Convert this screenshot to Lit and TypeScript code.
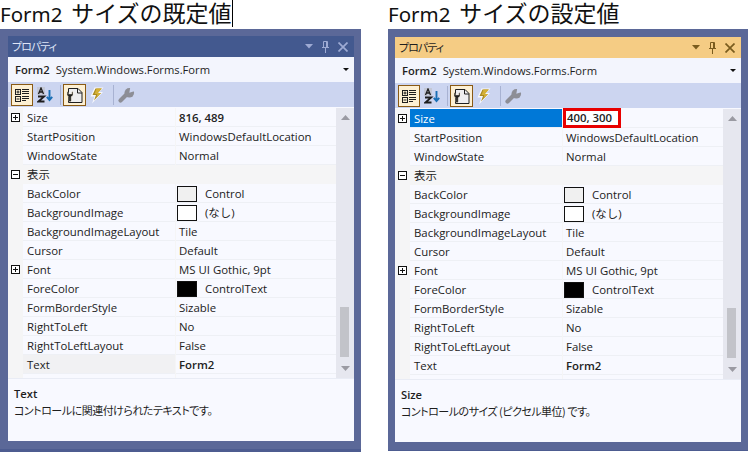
import { LitElement, html, css, svg } from "lit";
import { customElement, property } from "lit/decorators.js";

type Row = { kind?: "cat"; name: string; value?: string; bold?: boolean; plus?: boolean; swatch?: string; minus?: boolean };

const rows = (size: string): Row[] => [
  { name: "Size", value: size, bold: true, plus: true },
  { name: "StartPosition", value: "WindowsDefaultLocation" },
  { name: "WindowState", value: "Normal" },
  { kind: "cat", name: "表示", minus: true },
  { name: "BackColor", value: "Control", swatch: "#f0f0f0" },
  { name: "BackgroundImage", value: "(なし)", swatch: "#ffffff" },
  { name: "BackgroundImageLayout", value: "Tile" },
  { name: "Cursor", value: "Default" },
  { name: "Font", value: "MS UI Gothic, 9pt", plus: true },
  { name: "ForeColor", value: "ControlText", swatch: "#000000" },
  { name: "FormBorderStyle", value: "Sizable" },
  { name: "RightToLeft", value: "No" },
  { name: "RightToLeftLayout", value: "False" },
  { name: "Text", value: "Form2", bold: true },
];

const catIcon = svg`<svg width="16" height="16" viewBox="0 0 16 16"><g fill="none" stroke="#1e1e1e"><rect x="1.500" y="2.500" width="5" height="5"/><rect x="1.500" y="9.500" width="5" height="5"/></g><path d="M2.500 5h3M4 3.500v3M2.500 12h3" stroke="#1e1e1e"/><path d="M8 2.500h7M8 4.500h7M8 6.500h7M8 9.500h7M8 11.500h7M8 13.500h4" stroke="#1e1e1e"/></svg>`;
const azIcon = svg`<svg width="17" height="16" viewBox="0 0 17 16"><rect x="0" y="0" width="8" height="8" fill="#c4c8d6"/><path d="M1.500 7 4 1l2.500 6M2.600 5h2.800" fill="none" stroke="#1e1e1e" stroke-width="1.300"/><path d="M1 9.500h6.200L1.500 14.500H7.500" fill="none" stroke="#1e1e1e" stroke-width="1.800"/><path d="M12.500 3v10M9.800 9.800l2.700 3.200 2.700-3.200" fill="none" stroke="#1a6fb5" stroke-width="1.900"/></svg>`;
const pageIcon = svg`<svg width="18" height="18" viewBox="0 0 18 18"><path d="M2.500 2.500h9.500l4 4v10H2.500z" fill="#eeeef0" stroke="#1e1e1e"/><path d="M11.500 2.500v4.500h4.500" fill="none" stroke="#1e1e1e"/><path d="M1 5.500v3a2.300 2.300 0 0 0 1.800 2.100V14.500a1.200 1.200 0 0 0 2.400 0v-3.900A2.300 2.300 0 0 0 7 8.500V5.500L5.800 6.300V8H2.200V6.300z" fill="#1e1e1e" stroke="#fbeccb" stroke-width=".4"/></svg>`;
const boltIcon = svg`<svg width="18" height="18" viewBox="0 0 18 18"><path d="M6.500 1.500h9l-4 4.500h3.500L4 17.500l2.500-7H2.500z" fill="#f7f8fd"/><path d="M7.500 2.500h6.300l-4 4.500h3.200L6 14.500l2-5.500H4.500z" fill="#a98a22"/><path d="M8.500 2.500h5.300l-4 4.500h3.200L8.500 11.500l.8-3.500H6.500z" fill="#d4b035"/></svg>`;
const wrenchIcon = svg`<svg width="18" height="18" viewBox="0 0 18 18"><path d="M3.500 14.500 10 8" stroke="#8d8e96" stroke-width="4.200" stroke-linecap="round" fill="none"/><circle cx="12.300" cy="6.800" r="4.800" fill="#8d8e96"/><path d="M12.300 6.800 13.500 0H19V4.800z" fill="#ccd5f0"/></svg>`;

@customElement("prop-panel")
class PropPanel extends LitElement {
  @property() label = "Form2";
  @property() heading = "";
  @property() size = "";
  @property({ type: Boolean }) active = false;
  @property() descTitle = "";
  @property() descText = "";
  @property({ type: Boolean }) caret = false;

  static styles = css`
    :host { display: block; font-family: "Open Sans", "Noto Sans CJK JP", sans-serif; }
    h1 { margin: 0; height: 29px; font: 400 20.5px/27px "Noto Sans", "Noto Sans CJK JP", sans-serif; color: #111; white-space: nowrap; word-spacing: 3.5px; position: relative; }
    h1 .k { font-size: 23px; }
    .caret { position: absolute; left: 232px; top: 0; width: 1px; height: 27px; background: #000; }
    .frame { background: #5b6898; padding: 7px 7px 8px 8px; border-bottom: 3px solid #4d5c90; width: 346px; }
    .frame.on { padding: 8px 7px 8px 7px; border-bottom-width: 1px; }
    .inner { height: 405px; display: flex; flex-direction: column; background: #f8f9ff; }
    .title { height: 21px; flex: none; background: #43598f; color: #dfe5f7; display: flex; align-items: center; padding: 0 6px 0 4px; font: 11px/21px "Noto Sans CJK JP", sans-serif; justify-content: space-between; font-feature-settings: "palt"; letter-spacing: -1px; }
    .title.on { background: #f5cc84; color: #1e1e1e; }
    .title svg { display: block; }
    .btns { display: flex; gap: 9px; align-items: center; }
    .combo { height: 25px; flex: none; background: #f3f5fd; display: flex; align-items: center; padding: 0 5px 0 7px; font-size: 11.2px; color: #1e1e1e; gap: 6px; }
    .combo b { font-weight: 600; }
    .combo .sp { flex: 1; }
    .tri { width: 0; height: 0; border: 3px solid transparent; border-top: 3px solid #111; border-bottom: 0; }
    .tools { height: 25px; flex: none; background: #ccd5f0; display: flex; align-items: center; padding-left: 3px; margin-bottom: 1px; }
    .tb { width: 22px; height: 22px; box-sizing: border-box; display: flex; align-items: center; justify-content: center; flex: none; }
    .tb.az { margin-left: 1px; }
    .tb.sel { background: #fdf0d3; border: 1px solid #8a5a14; }
    .tb.page { width: 23px; }
    .sep { width: 1px; height: 20px; background: #a8b2d2; flex: none; }
    .s1 { margin: 0 2px 0 4px; }
    .s2 { margin: 0 1px 0 5px; }
    .body { height: 270px; flex: none; display: flex; }
    .grid { flex: 1; display: flex; flex-direction: column; background: #f5f5f6; }
    .row { height: 19px; flex: none; display: flex; font-size: 11.4px; line-height: 19px; color: #222; }
    .gut { width: 15px; flex: none; display: flex; align-items: center; justify-content: center; }
    .name { width: 152px; flex: none; box-sizing: border-box; padding-left: 4px; background: #f8f9ff; border-bottom: 1px solid #eef0f5; white-space: nowrap; }
    .val { flex: 1; margin-left: 1px; padding-left: 3px; display: flex; align-items: flex-start; gap: 8px; background: #f8f9ff; border-bottom: 1px solid #eef0f5; white-space: nowrap; }
    .val b { font-weight: 600; }
    .cat .name { width: auto; flex: 1; background: transparent; border: 0; font-family: "Noto Sans CJK JP", sans-serif; }
    .hot { background: #0078d7; color: #fff; }
    .quiet .name { background: #f1f1f3; }
    .val.redcell { padding-left: 0; }
    .red { border: 3px solid #e80000; width: 58px; height: 20px; margin-top: -1px; flex: none; padding-left: 1px; box-sizing: border-box; background: #fff; line-height: 14px; }
    .swatch { width: 20px; height: 16px; box-sizing: border-box; border: 1px solid #111; margin: 2px 0 0 -2px; flex: none; }
    .tail { height: 4px; flex: none; display: flex; }
    .tail i { display: block; background: #f8f9ff; }
    .scroll { width: 18px; flex: none; background: #e6e7ef; display: flex; flex-direction: column; align-items: center; justify-content: space-between; padding: 7px 0 7px; box-sizing: border-box; position: relative; }
    .thumb { position: absolute; left: 4px; width: 9px; bottom: 21px; height: 50px; background: #c2c3c9; }
    .desc { height: 63px; flex: none; box-sizing: border-box; padding: 6px 6px; border-top: 1px solid #e9ecf5; background: #f8f9ff; font-size: 11.2px; line-height: 17px; color: #1e1e1e; }
    .desc b { display: block; font-weight: 600; }
    .desc span { font-family: "Noto Sans CJK JP", sans-serif; font-size: 11px; font-feature-settings: "palt"; letter-spacing: -0.5px; }
  `;

  plusIcon(minus: boolean) {
    return html`<svg width="9" height="9" viewBox="0 0 9 9"><rect x=".5" y=".5" width="8" height="8" fill="#fff" stroke="#111"/><path d="${minus ? "M2 4.500h5" : "M2 4.500h5M4.500 2v5"}" stroke="#111"/></svg>`;
  }

  render() {
    const glyph = this.active ? "#7a5c1e" : "#9eabd4";
    return html`
      <h1>${this.label} <span class="k">${this.heading}</span>${this.caret ? html`<span class="caret"></span>` : ""}</h1>
      <div class="frame ${this.active ? "on" : ""}">
        <div class="inner">
          <div class="title ${this.active ? "on" : ""}">
            <span>プロパティ</span>
            <span class="btns">
              <svg width="8" height="5" viewBox="0 0 8 5"><path d="M0 0h8L4 4.500z" fill="${glyph}"/></svg>
              <svg width="7" height="12" viewBox="0 0 7 12"><path d="M1.500 .5h4v6h-4zM0 6.500h7M3.500 7v5M4.500 1v5.500" fill="none" stroke="${glyph}"/></svg>
              <svg width="10" height="10" viewBox="0 0 10 10"><path d="M.5 .5l9 9M9.500 .5l-9 9" stroke="${glyph}" stroke-width="1.700"/></svg>
            </span>
          </div>
          <div class="combo"><b>Form2</b><span>System.Windows.Forms.Form</span><span class="sp"></span><span class="tri"></span></div>
          <div class="tools">
            <span class="tb sel">${catIcon}</span>
            <span class="tb az">${azIcon}</span>
            <span class="sep s1"></span>
            <span class="tb sel page">${pageIcon}</span>
            <span class="tb">${boltIcon}</span>
            <span class="sep s2"></span>
            <span class="tb">${wrenchIcon}</span>
          </div>
          <div class="body">
            <div class="grid">
              ${rows(this.size).map((r) => {
                const hot = this.active && r.name === "Size";
                const quiet = !this.active && r.name === "Text";
                return html`<div class="row ${r.kind === "cat" ? "cat" : ""} ${quiet ? "quiet" : ""}">
                  <span class="gut">${r.plus || r.minus ? this.plusIcon(!!r.minus) : ""}</span>
                  <span class="name ${hot ? "hot" : ""}">${r.name}</span>
                  ${r.kind === "cat"
                    ? ""
                    : html`<span class="val ${hot ? "redcell" : ""}">
                        ${r.swatch ? html`<i class="swatch" style="background:${r.swatch}"></i>` : ""}
                        ${hot ? html`<b class="red">${r.value}</b>` : r.bold ? html`<b>${r.value}</b>` : r.value}
                      </span>`}
                </div>`;
              })}
              <div class="tail"><span class="gut"></span><i style="width:152px"></i><i style="flex:1;margin-left:1px"></i></div>
            </div>
            <div class="scroll">
              <svg width="9" height="5" viewBox="0 0 9 5"><path d="M0 5h9L4.500 0z" fill="#9a9aa2"/></svg>
              <span class="thumb"></span>
              <svg width="9" height="5" viewBox="0 0 9 5"><path d="M0 0h9L4.500 5z" fill="#9a9aa2"/></svg>
            </div>
          </div>
          <div class="desc"><b>${this.descTitle}</b><span>${this.descText}</span></div>
        </div>
      </div>
    `;
  }
}

@customElement("app-root")
export class AppRoot extends LitElement {
  static styles = css`
    :host { display: flex; gap: 27px; width: 750px; height: 454px; overflow: hidden; background: #fff; align-items: flex-start; }
  `;
  render() {
    return html`
      <prop-panel heading="サイズの既定値" size="816, 489" caret descTitle="Text" descText="コントロールに関連付けられたテキストです。"></prop-panel>
      <prop-panel active heading="サイズの設定値" size="400, 300" descTitle="Size" descText="コントロールのサイズ (ピクセル単位) です。"></prop-panel>
    `;
  }
}
void PropPanel;
